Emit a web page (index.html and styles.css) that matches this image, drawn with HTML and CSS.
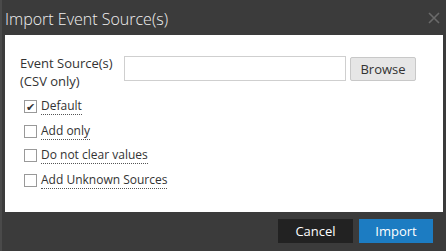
FILE: index.html
```html
<!DOCTYPE html>
<html lang="en">
<head>
  <meta charset="UTF-8" />
  <title>Import Event Source(s)</title>
  <link rel="stylesheet" href="styles.css">
</head>
<body>
  <div class="dialog">
    <div class="header">
      <span class="title">Import Event Source(s)</span>
      <svg class="close" width="12" height="12" viewBox="0 0 12 12">
        <path d="M1 1L11 11M11 1L1 11" stroke="#6a6a6a" stroke-width="1.6" fill="none"/>
      </svg>
    </div>
    <div class="panel">
      <div class="row">
        <label class="field-label">Event Source(s)<br>(CSV only)</label>
        <input type="text" class="file-input">
        <button class="browse">Browse</button>
      </div>
      <div class="options">
        <label class="option"><span class="box checked">&#x2714;</span><span class="text">Default</span></label>
        <label class="option"><span class="box"></span><span class="text">Add only</span></label>
        <label class="option"><span class="box"></span><span class="text">Do not clear values</span></label>
        <label class="option"><span class="box"></span><span class="text">Add Unknown Sources</span></label>
      </div>
    </div>
    <div class="footer">
      <button class="btn cancel">Cancel</button>
      <button class="btn primary">Import</button>
    </div>
  </div>
</body>
</html>
```

FILE: styles.css
```css
body {
  margin: 0;
  background: #3b3b3b;
  font-family: "Open Sans", sans-serif;
}
.dialog {
  width: 446px;
  height: 251px;
  border-left: 2px solid #4a4a4a;
  box-sizing: border-box;
}
.header {
  height: 35px;
  display: flex;
  justify-content: space-between;
  align-items: center;
  padding: 0 6px 0 3px;
}
.title {
  color: #f0f0f0;
  font-size: 16px;
  font-weight: 300;
  margin-top: 2px;
}
.close {
  margin-top: 1px;
}
.panel {
  background: #fff;
  margin: 0 3px 0 3px;
  height: 177px;
  box-sizing: border-box;
  padding: 21px 0 0 15px;
  color: #333;
  font-size: 13px;
}
.row {
  display: flex;
  align-items: flex-start;
}
.field-label {
  width: 104px;
  line-height: 18px;
  margin-top: -2px;
}
.file-input {
  width: 222px;
  height: 25px;
  box-sizing: border-box;
  border: 1px solid #cfcfcf;
  margin: 0;
}
.browse {
  margin-left: 4px;
  margin-top: 1px;
  width: 66px;
  height: 24px;
  background: #e6e6e6;
  border: 1px solid #c8c8c8;
  border-radius: 2px;
  font-family: "Open Sans", sans-serif;
  font-size: 13px;
  color: #333;
  padding: 0;
}
.options {
  margin-top: 4px;
  padding-left: 4px;
  font-size: 12px;
}
.option {
  display: flex;
  align-items: center;
  height: 24.7px;
}
.box {
  width: 11px;
  height: 11px;
  border: 1px solid #999;
  margin-right: 4px;
  font-size: 11px;
  line-height: 11px;
  text-align: center;
  color: #333;
}
.text {
  border-bottom: 1px dotted #555;
  line-height: 16px;
}
.footer {
  display: flex;
  justify-content: flex-end;
  gap: 6px;
  padding: 7px 13px 0 0;
}
.btn {
  height: 24px;
  border: none;
  color: #fff;
  font-family: "Open Sans", sans-serif;
  font-size: 13px;
  padding: 0;
}
.cancel {
  background: #222;
  width: 75px;
}
.primary {
  background: #1c7cc2;
  width: 74px;
}
```
